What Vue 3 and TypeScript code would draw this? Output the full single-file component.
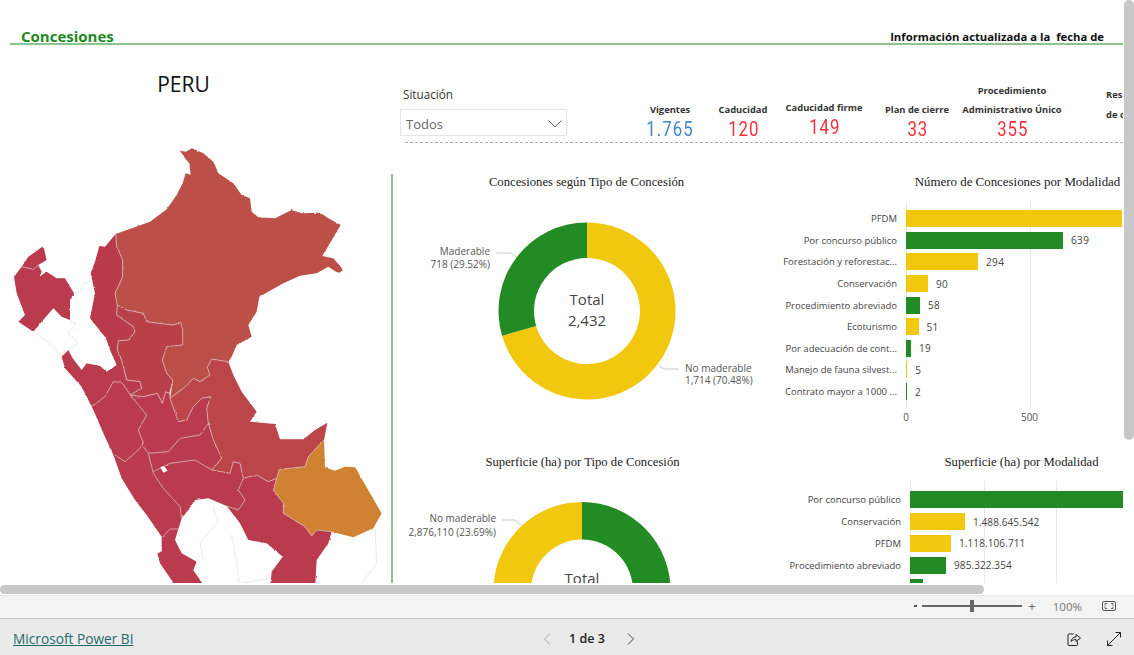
<template>
  <div class="viewer">
    <main class="report">
      <header class="page-head">
        <span class="page-title">Concesiones</span>
        <span class="page-date">Información actualizada a la&nbsp; fecha de</span>
      </header>

      <div class="canvas">
        <section class="map-col">
          <h1 class="map-title">PERU</h1>
          <svg class="map" viewBox="0 0 1176 1380" aria-label="Mapa del Perú">
            <defs>
              <filter id="rough" x="0" y="0" width="100%" height="100%">
                <feTurbulence type="fractalNoise" baseFrequency="0.09" numOctaves="2" seed="4" />
                <feDisplacementMap in="SourceGraphic" scale="6" xChannelSelector="R" yChannelSelector="G" />
              </filter>
            </defs>
            <g filter="url(#rough)">
              <g class="outside">
                <polyline v-for="(p, i) in outsideLines" :key="i" :points="p" />
              </g>
              <polygon v-for="r in regions" :key="r.name" :points="r.points" :fill="r.fill" />
              <g class="inner">
                <polyline v-for="(p, i) in innerLines" :key="i" :points="p" />
              </g>
            </g>
            <polygon class="lake" points="481,1012 492,1008 503,1022 490,1028" />
          </svg>
        </section>

        <section class="main-col">
          <div class="top-row">
            <div class="slicer">
              <div class="slicer-label">Situación</div>
              <div class="slicer-box">
                <span>Todos</span>
                <svg width="14" height="8" viewBox="0 0 14 8"><path d="M0.5 0.5 L7 7 L13.5 0.5" fill="none" stroke="#666" /></svg>
              </div>
            </div>
            <div class="kpis">
              <div v-for="k in kpis" :key="k.value" class="kpi" :class="k.cls" :style="{ width: k.width + 'px' }">
                <div class="kpi-label" v-for="l in k.label" :key="l">{{ l }}</div>
                <div class="kpi-value" :class="{ blue: k.blue }">{{ k.value }}</div>
              </div>
              <div class="kpi-cut">
                <div>Res</div>
                <div>de c</div>
              </div>
            </div>
          </div>

          <div class="charts">
            <div class="chart donut-one">
              <h2>Concesiones según Tipo de Concesión</h2>
              <svg class="donut" width="370" height="250" viewBox="0 0 370 250">
                <path :d="arc(187, 130, 88.5, 53, 0, 253.7)" fill="#f2c80f" />
                <path :d="arc(187, 130, 88.5, 53, 253.7, 360)" fill="#238b23" />
                <polyline class="leader" points="96,72 111,72 116,76" />
                <polyline class="leader" points="279,188 264,188 259,185" />
                <text x="187" y="124" class="big">Total</text>
                <text x="187" y="145" class="big">2,432</text>
                <text x="90" y="74" class="lbl end">Maderable</text>
                <text x="90" y="87" class="lbl end">718 (29.52%)</text>
                <text x="285" y="191" class="lbl">No maderable</text>
                <text x="285" y="203" class="lbl">1,714 (70.48%)</text>
              </svg>
            </div>

            <div class="chart bars-one">
              <h2>Número de Concesiones por Modalidad</h2>
              <div class="plot">
                <div class="grid-lines">
                  <i class="g-a" />
                  <i class="g-b" />
                </div>
                <div v-for="b in countBars" :key="b.name" class="bar-row">
                  <span class="bar-name">{{ b.name }}</span>
                  <span class="bar" :class="b.color" :style="{ width: b.w + 'px' }" />
                  <span class="bar-val">{{ b.val }}</span>
                </div>
              </div>
              <div class="axis">
                <span>0</span>
                <span>500</span>
              </div>
            </div>

            <div class="chart donut-two">
              <h2>Superficie (ha) por Tipo de Concesión</h2>
              <svg class="donut" width="370" height="130" viewBox="0 0 370 130">
                <path :d="arc(182, 130.5, 88.5, 51, 0, 274.7)" fill="#238b23" />
                <path :d="arc(182, 130.5, 88.5, 51, 274.7, 360)" fill="#f2c80f" />
                <polyline class="leader" points="102,60 115,60 121,65" />
                <text x="96" y="62" class="lbl end">No maderable</text>
                <text x="96" y="76" class="lbl end">2,876,110 (23.69%)</text>
                <text x="182" y="124" class="big">Total</text>
              </svg>
            </div>

            <div class="chart bars-two">
              <h2>Superficie (ha) por Modalidad</h2>
              <div class="plot">
                <div class="grid-lines">
                  <i class="g-a" />
                  <i class="g-b" />
                  <i class="g-c" />
                </div>
                <div v-for="b in areaBars" :key="b.name" class="bar-row">
                  <span class="bar-name">{{ b.name }}</span>
                  <span class="bar" :class="b.color" :style="{ width: b.w + 'px' }" />
                  <span class="bar-val">{{ b.val }}</span>
                </div>
              </div>
            </div>
          </div>
        </section>
      </div>

      <div class="vscroll" />
      <div class="hscroll" />
    </main>

    <div class="zoom-bar">
      <span class="zoom-minus" />
      <div class="slider"><span class="thumb" /></div>
      <span class="zoom-plus">+</span>
      <span class="zoom-pct">100%</span>
      <svg width="14" height="10" viewBox="0 0 14 10" class="fit">
        <rect x="0.5" y="0.5" width="13" height="9" rx="1.5" fill="none" stroke="#555" />
        <path d="M3 4.5V2.5h2M9 2.5h2v2M11 5.5v2H9M5 7.5H3v-2" fill="none" stroke="#666" />
      </svg>
    </div>

    <footer class="foot">
      <a class="pbi-link">Microsoft Power BI</a>
      <nav class="pager">
        <svg width="8" height="12" viewBox="0 0 8 12"><path d="M7 0.5 L1.5 6 L7 11.5" fill="none" stroke="#a6a6a6" /></svg>
        <span>1 de 3</span>
        <svg width="8" height="12" viewBox="0 0 8 12"><path d="M1 0.5 L6.5 6 L1 11.5" fill="none" stroke="#444" /></svg>
      </nav>
      <div class="foot-icons">
        <svg width="14" height="14" viewBox="0 0 14 14">
          <path d="M6.5 2H2a1 1 0 0 0-1 1v9.5a1 1 0 0 0 1 1h7.5a1 1 0 0 0 1-1V9.5" fill="none" stroke="#222" />
          <path d="M4 9.5C4.5 6.5 6.5 5 9 5V2.5L13.5 6 9 9.5V7.5C7 7.5 5.5 8 4 9.5Z" fill="none" stroke="#222" />
        </svg>
        <svg width="14" height="14" viewBox="0 0 14 14">
          <path d="M8.5 0.5H13.5V5.5M13.5 0.5L0.5 13.5M0.5 8.5V13.5H5.5" fill="none" stroke="#222" />
        </svg>
      </div>
    </footer>
  </div>
</template>

<script setup lang="ts">
interface Kpi {
  label: string[];
  value: string;
  width: number;
  cls: string;
  blue?: boolean;
}

interface Bar {
  name: string;
  val: string;
  w: number;
  color: 'yellow' | 'green';
}

const kpis: Kpi[] = [
  { label: ['Vigentes'], value: '1.765', width: 74, cls: 'k-a', blue: true },
  { label: ['Caducidad'], value: '120', width: 72, cls: 'k-a' },
  { label: ['Caducidad firme'], value: '149', width: 90, cls: 'k-b' },
  { label: ['Plan de cierre'], value: '33', width: 96, cls: 'k-c' },
  { label: ['Procedimiento', 'Administrativo Único'], value: '355', width: 106, cls: 'k-d' }
];

const countBars: Bar[] = [
  { name: 'PFDM', val: '', w: 216, color: 'yellow' },
  { name: 'Por concurso público', val: '639', w: 157, color: 'green' },
  { name: 'Forestación y reforestac...', val: '294', w: 72, color: 'yellow' },
  { name: 'Conservación', val: '90', w: 22, color: 'yellow' },
  { name: 'Procedimiento abreviado', val: '58', w: 14, color: 'green' },
  { name: 'Ecoturismo', val: '51', w: 12.5, color: 'yellow' },
  { name: 'Por adecuación de cont...', val: '19', w: 5, color: 'green' },
  { name: 'Manejo de fauna silvest...', val: '5', w: 1.3, color: 'yellow' },
  { name: 'Contrato mayor a 1000 ...', val: '2', w: 1, color: 'green' }
];

const areaBars: Bar[] = [
  { name: 'Por concurso público', val: '', w: 213, color: 'green' },
  { name: 'Conservación', val: '1.488.645.542', w: 55, color: 'yellow' },
  { name: 'PFDM', val: '1.118.106.711', w: 41, color: 'yellow' },
  { name: 'Procedimiento abreviado', val: '985.322.354', w: 36, color: 'green' },
  { name: '', val: '', w: 13, color: 'green' }
];

// map shapes are traced in a 3x coordinate space
const regions = [
  {
    name: 'Loreto',
    fill: '#bc4f47',
    points:
      '347,312 450,275 500,238 530,195 548,160 557,130 572,134 568,100 555,85 540,62 558,65 575,55 610,70 640,95 655,130 700,160 725,195 750,205 755,245 775,262 825,265 875,240 905,250 960,248 985,265 1022,285 967,378 1000,385 1030,420 1015,430 985,410 950,430 900,437 850,460 778,500 770,545 745,585 755,620 710,645 695,680 685,695 635,687 622,712 630,735 600,755 580,745 550,775 510,805 518,750 500,730 487,690 500,650 545,645 548,600 542,577 520,585 475,580 440,575 430,550 380,540 350,525 345,490 368,440 368,390 350,350'
  },
  {
    name: 'Amazonas',
    fill: '#b93b4b',
    points:
      '347,312 350,350 368,390 368,440 345,490 352,525 350,555 400,590 405,605 385,630 355,632 352,660 330,660 318,625 270,565 285,490 272,430 285,395 298,348 315,350'
  },
  {
    name: 'San Martin',
    fill: '#b9404a',
    points:
      '352,525 380,540 430,550 440,575 475,580 520,585 542,577 548,600 548,645 500,650 487,690 500,730 518,750 508,790 497,785 487,820 472,790 430,800 390,795 425,775 420,755 380,750 365,690 352,660 355,632 385,630 405,605 400,590 350,555'
  },
  {
    name: 'Ucayali',
    fill: '#bc4548',
    points:
      '510,805 550,775 580,745 600,755 630,735 622,712 635,687 685,695 700,735 725,785 770,845 750,875 825,882 840,928 910,928 945,900 982,878 972,930 925,980 915,1010 838,1018 830,1045 805,1055 770,1035 730,1045 720,1000 700,995 690,1030 635,1020 665,985 640,930 625,880 620,835 632,800 605,805 580,830 560,870 535,875'
  },
  {
    name: 'Madre de Dios',
    fill: '#d08231',
    points:
      '972,930 975,1012 1005,1022 1035,1010 1065,1012 1145,1150 1120,1195 1060,1222 995,1205 950,1200 935,1218 915,1190 850,1150 850,1120 820,1080 838,1018 915,1010 925,980'
  },
  {
    name: 'Piura',
    fill: '#b93b4d',
    points:
      '130,348 140,390 115,405 125,425 118,440 140,425 170,445 195,445 222,490 210,510 210,570 185,560 160,535 125,575 100,605 55,575 75,555 50,490 42,440 65,410 85,380'
  },
  {
    name: 'Sur',
    fill: '#b93b4d',
    points:
      '185,680 205,660 218,685 245,720 260,700 300,708 320,725 350,705 330,660 352,660 365,690 380,750 420,755 425,775 390,795 430,800 472,790 487,820 497,785 508,790 510,805 535,875 560,870 580,830 605,805 632,800 620,835 625,880 640,930 665,985 635,1020 690,1030 700,995 720,1000 730,1045 770,1035 805,1055 830,1045 838,1018 820,1080 850,1120 850,1150 915,1190 935,1218 950,1200 995,1205 985,1240 950,1290 945,1380 810,1380 815,1325 848,1280 800,1240 745,1230 720,1180 680,1128 625,1105 585,1110 565,1140 545,1165 525,1230 545,1270 590,1295 580,1320 620,1380 535,1380 480,1300 472,1270 485,1265 485,1220 440,1155 405,1110 365,1045 340,975 310,910 280,840 245,770 195,715'
  }
];

const innerLines = [
  '275,830 315,800 340,755 365,757 395,800 440,855 415,900 430,940 420,955 375,995 345,975',
  '430,950 445,970 505,965 540,925 600,915 625,880',
  '445,970 460,1030 490,1075 540,1130 545,1165',
  '460,1025 510,1000 585,990 635,1020',
  '487,1222 510,1197 535,1197',
  '730,1045 715,1080 735,1110 715,1140 680,1128',
  '65,410 100,418 115,405',
  '347,312 350,350 368,390 368,440 345,490 352,525 350,555 400,590 405,605 385,630 355,632 352,660 365,690 380,750 420,755 425,775 390,795 430,800 472,790 487,820 497,785 508,790',
  '352,525 380,540 430,550 440,575 475,580 520,585 542,577 548,600 548,645 500,650 487,690 500,730 518,750 510,805 535,875 560,870 580,830 605,805 632,800 620,835 625,880 640,930 665,985 635,1020 690,1030 700,995 720,1000 730,1045 770,1035 805,1055 830,1045',
  '510,805 550,775 580,745 600,755 630,735 622,712 635,687 685,695',
  '972,930 925,980 915,1010 838,1018 820,1080 850,1120 850,1150 915,1190 935,1218 950,1200 995,1205'
];

const outsideLines = [
  '100,605 150,640 185,680',
  '222,490 240,485 255,458 272,455',
  '210,572 228,580 205,610 235,640 205,660',
  '640,1130 655,1175 600,1240 610,1295',
  '695,1215 710,1300 718,1360 810,1345',
  '1125,1195 1130,1300 1085,1360'
];

// donut segment, angles in degrees clockwise from the top
const arc = (cx: number, cy: number, r: number, inner: number, from: number, to: number) => {
  const pt = (rad: number, deg: number) => {
    const a = ((deg - 90) * Math.PI) / 180;
    return `${(cx + rad * Math.cos(a)).toFixed(2)} ${(cy + rad * Math.sin(a)).toFixed(2)}`;
  };
  const large = to - from > 180 ? 1 : 0;
  return `M${pt(r, from)} A${r} ${r} 0 ${large} 1 ${pt(r, to)} L${pt(inner, to)} A${inner} ${inner} 0 ${large} 0 ${pt(inner, from)} Z`;
};
</script>

<style>
html,
body {
  margin: 0;
  overflow: hidden;
}
</style>

<style scoped>
.viewer {
  display: flex;
  flex-direction: column;
  width: 1134px;
  height: 655px;
  background: #fff;
  font-family: 'Open Sans', 'Noto Sans', sans-serif;
  color: #333;
}

.report {
  position: relative;
  height: 595px;
  overflow: hidden;
  flex: none;
}

.page-head {
  display: flex;
  justify-content: space-between;
  align-items: flex-end;
  height: 43px;
  margin: 0 11px 0 10px;
  padding: 0 19px 0 11px;
  border-bottom: 2px solid #90c48e;
}

.page-title {
  font-weight: 700;
  font-size: 15px;
  line-height: 15px;
  margin-bottom: -1px;
  color: #1f8a23;
}

.page-date {
  font-weight: 700;
  font-size: 11.3px;
  line-height: 14px;
  margin-bottom: -1px;
  color: #111;
}

.canvas {
  display: flex;
  height: 538px;
  overflow: hidden;
}

.map-col {
  width: 392px;
  flex: none;
  position: relative;
}

.map-title {
  margin: 26px 0 0;
  width: 367px;
  text-align: center;
  font-weight: 400;
  font-size: 21px;
  line-height: 26px;
  color: #111;
}

.map {
  position: absolute;
  left: 0;
  top: 85px;
  width: 392px;
  height: 460px;
}

.inner polyline {
  fill: none;
  stroke: #d9b5b5;
  stroke-width: 2.5;
  stroke-linejoin: round;
}

.outside polyline {
  fill: none;
  stroke: #e2e2e2;
  stroke-width: 2.2;
}

.lake {
  fill: #fff;
}

.main-col {
  flex: 1;
  min-width: 0;
  display: flex;
  flex-direction: column;
}

.top-row {
  display: flex;
  height: 98px;
  margin-left: 8px;
  margin-right: 11px;
  position: relative;
  overflow: hidden;
}

.top-row::after {
  content: '';
  position: absolute;
  left: 5px;
  right: 0;
  bottom: 0;
  border-bottom: 1px dashed #aaa;
}

.slicer {
  width: 167px;
  flex: none;
  padding-top: 41px;
}

.slicer-label {
  font-size: 11.7px;
  line-height: 16px;
  margin-left: 3px;
  margin-bottom: 7px;
  color: #333;
}

.slicer-box {
  display: flex;
  align-items: center;
  justify-content: space-between;
  height: 27px;
  padding: 2px 4px 0 5px;
  border: 1px solid #e6e6e6;
  box-sizing: border-box;
  font-size: 13px;
  color: #666;
}

.kpis {
  display: flex;
  align-items: flex-end;
  margin-left: 66px;
  height: 96px;
  flex: none;
}

.kpi {
  text-align: center;
  flex: none;
}

.kpi-label,
.kpi-cut {
  font-size: 9.4px;
  font-weight: 700;
  line-height: 19px;
  color: #333;
  white-space: nowrap;
}

.kpi-value {
  font-family: Roboto, sans-serif;
  font-size: 20px;
  line-height: 22px;
  margin-top: -1px;
  padding: 0 0 1px 2px;
  letter-spacing: 1.2px;
  color: #f0303c;
  transform: scaleX(0.84);
}

.kpi-value.blue {
  padding-left: 0;
  color: #3f86c4;
}

.k-b {
  margin-bottom: 2px;
}

.k-d {
  margin-left: -6px;
}

.kpi-cut {
  position: absolute;
  left: 706px;
  top: 40px;
}

.kpi-cut div {
  line-height: 20px;
}

.charts {
  flex: 1;
  min-height: 0;
  margin-top: 31px;
  margin-left: -1px;
  border-left: 2px solid #90c48e;
  display: grid;
  grid-template-columns: 370px 1fr;
  grid-template-rows: 280px 1fr;
}

.chart {
  min-width: 0;
}

.chart h2 {
  margin: 0;
  font-family: 'Liberation Serif', serif;
  font-weight: 400;
  font-size: 12.7px;
  line-height: 16px;
  color: #222;
  text-align: center;
  white-space: nowrap;
}

.donut {
  display: block;
}

.donut-one h2 {
  width: 387px;
}

.donut-one .donut {
  margin: -9px 0 0 6.5px;
}

.donut-two h2 {
  width: 379px;
}

.donut-two .donut {
  margin: -10px 0 0 7px;
}

.leader {
  fill: none;
  stroke: #ccc;
}

.big {
  font-size: 15px;
  fill: #444;
  text-anchor: middle;
}

.lbl {
  font-size: 10px;
  fill: #555;
}

.lbl.end {
  text-anchor: end;
}

.plot {
  position: relative;
}

.grid-lines {
  position: absolute;
  top: -6px;
  bottom: -6px;
  left: 143px;
}

.grid-lines i {
  position: absolute;
  top: 0;
  bottom: 0;
  width: 1px;
  background: #e8e8e8;
}

.g-a {
  left: 0;
}

.bar-row {
  position: relative;
  display: flex;
  align-items: center;
  height: 21.6px;
}

.bar-name {
  width: 134px;
  margin-right: 9px;
  flex: none;
  text-align: right;
  font-size: 9.5px;
  color: #444;
  white-space: nowrap;
}

.bar {
  height: 17px;
  flex: none;
}

.bar.yellow {
  background: #f2c80f;
}

.bar.green {
  background: #238b23;
}

.bar-val {
  margin-left: 8px;
  font-size: 10px;
  letter-spacing: 0.4px;
  color: #444;
  white-space: nowrap;
}

.bars-one h2 {
  padding-left: 138px;
  font-size: 12.9px;
}

.bars-one .plot {
  margin-top: 18px;
}

.bars-one .g-b {
  left: 123.5px;
}

.axis {
  display: flex;
  margin: 8px 0 0 133px;
  font-size: 10px;
  line-height: 14px;
  color: #555;
}

.axis span {
  width: 20px;
  text-align: center;
}

.axis span + span {
  margin-left: 103.5px;
}

.bars-two h2 {
  padding-left: 146px;
}

.bars-two .plot {
  margin-top: 19px;
}

.bars-two .grid-lines {
  left: 147px;
  top: -8px;
}

.bars-two .bar-row {
  height: 21.8px;
}

.bars-two .bar-name {
  width: 138px;
}

.bars-two .bar-val {
  letter-spacing: 0.1px;
}

.bars-two .g-b {
  left: 73.5px;
}

.bars-two .g-c {
  left: 146px;
}

.vscroll {
  position: absolute;
  right: 0;
  top: 0;
  width: 10px;
  height: 440px;
  border-radius: 5px;
  background: #c8c8c8;
}

.hscroll {
  position: absolute;
  left: 0;
  top: 585px;
  width: 984px;
  height: 9px;
  border-radius: 5px;
  background: #c8c8c8;
}

.zoom-bar {
  display: flex;
  align-items: center;
  justify-content: flex-end;
  height: 24px;
  flex: none;
  box-sizing: border-box;
  padding: 0 18px 2px 0;
  background: #f3f3f3;
  border-top: 1px solid #e6e6e6;
  border-bottom: 1px solid #c8c8c8;
}

.zoom-minus {
  width: 3px;
  height: 2px;
  background: #555;
}

.slider {
  position: relative;
  width: 100px;
  height: 2px;
  margin-left: 5px;
  background: #666;
}

.thumb {
  position: absolute;
  left: 48px;
  top: -5px;
  width: 4px;
  height: 12px;
  background: #666;
}

.zoom-plus {
  margin-left: 6px;
  font-size: 13px;
  line-height: 14px;
  color: #666;
}

.zoom-pct {
  margin-left: 17px;
  font-size: 11.5px;
  color: #777;
}

.fit {
  margin-left: 20px;
}

.foot {
  flex: 1;
  display: flex;
  align-items: center;
  padding: 3px 13px 0;
  background: #eaeaea;
}

.pbi-link {
  width: 120px;
  flex: none;
  font-size: 13.7px;
  color: #1f6b6b;
  text-decoration: underline;
  white-space: nowrap;
}

.pager {
  display: flex;
  align-items: center;
  margin-left: 410px;
  font-size: 12.5px;
  font-weight: 600;
  color: #222;
}

.pager span {
  margin: 0 22px 0 18px;
}

.foot-icons {
  display: flex;
  align-items: center;
  gap: 26px;
  margin-left: auto;
}
</style>
